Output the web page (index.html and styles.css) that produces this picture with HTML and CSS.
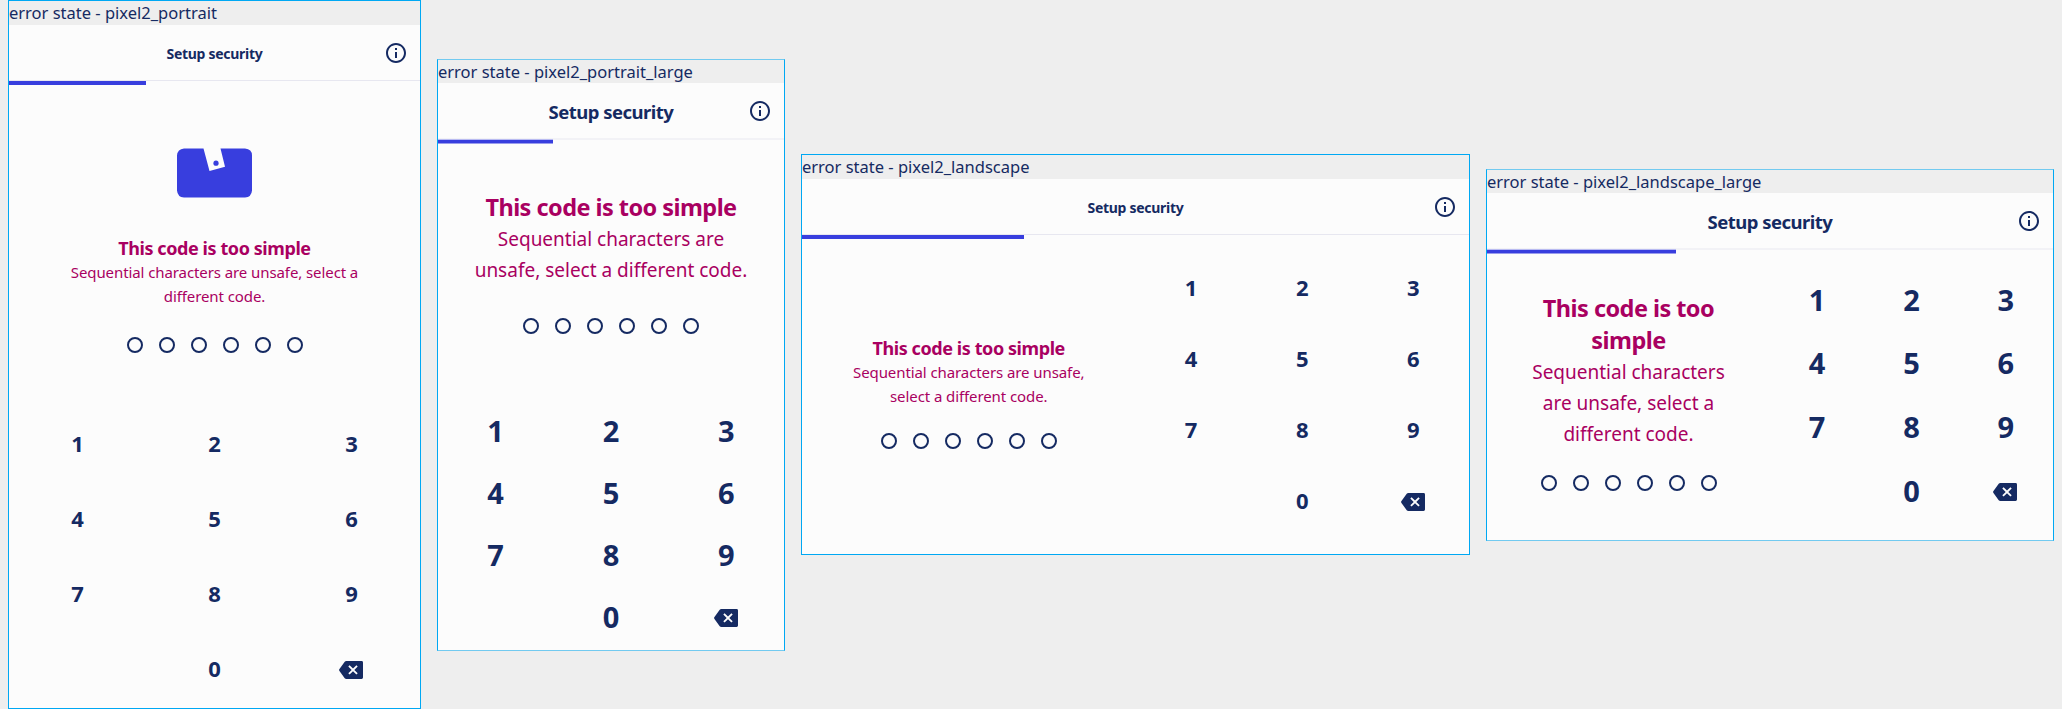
FILE: index.html
```
<!DOCTYPE html>
<html lang="en">
<head>
<meta charset="utf-8">
<title>Setup security - error state</title>
<link rel="stylesheet" href="styles.css">
</head>
<body>
<svg width="0" height="0" class="sprite">
  <symbol id="info" viewBox="0 0 24 24"><path d="M11 7h2v2h-2zm0 4h2v6h-2zm1-9C6.48 2 2 6.48 2 12s4.48 10 10 10 10-4.48 10-10S17.52 2 12 2zm0 18c-4.41 0-8-3.59-8-8s3.59-8 8-8 8 3.59 8 8-3.59 8-8 8z"/></symbol>
  <symbol id="backspace" viewBox="0 0 24 18"><path fill-rule="evenodd" d="M22.6 0H7.4Q6.300 0 5.700 .8L.3 8.300Q-.1 9 .3 9.700L5.700 17.200Q6.300 18 7.400 18H22.600Q24 18 24 16.600V1.400Q24 0 22.600 0ZM18.700 12.300L17.400 13.600 14 10.200 10.600 13.600 9.300 12.300 12.700 8.900 9.300 5.500 10.600 4.200 14 7.600 17.400 4.200 18.700 5.500 15.300 8.900Z"/></symbol>
</svg>
<main class="board">

  <section class="device portrait">
    <div class="label"><span>error state - pixel2_portrait</span></div>
    <header class="bar"><h1>Setup security</h1><svg class="info"><use href="#info"/></svg></header>
    <div class="progress"><i></i></div>
    <div class="body">
      <div class="message">
        <svg class="logo" viewBox="0 0 75 50"><path fill="#383ede" d="M7 .5H26.500L32.500 23 48 18.800 43.500 .5H68Q75 1 75 7.500V42.500Q74.500 49 68 49.500H7Q.500 49 0 42.500V7.500Q.500 1 7 .5Z"/><circle cx="39" cy="15.200" r="2.600" fill="#383ede"/></svg>
        <h2>This code is too simple</h2>
        <p>Sequential characters are unsafe, select a<br>different code.</p>
        <div class="dots"><i></i><i></i><i></i><i></i><i></i><i></i></div>
      </div>
      <div class="keys"><b>1</b><b>2</b><b>3</b><b>4</b><b>5</b><b>6</b><b>7</b><b>8</b><b>9</b><b></b><b>0</b><b><svg><use href="#backspace"/></svg></b></div>
    </div>
  </section>

  <section class="device portrait large">
    <div class="label"><span>error state - pixel2_portrait_large</span></div>
    <header class="bar"><h1>Setup security</h1><svg class="info"><use href="#info"/></svg></header>
    <div class="progress"><i></i></div>
    <div class="body">
      <div class="message">
        <h2>This code is too simple</h2>
        <p>Sequential characters are<br>unsafe, select a different code.</p>
        <div class="dots"><i></i><i></i><i></i><i></i><i></i><i></i></div>
      </div>
      <div class="keys"><b>1</b><b>2</b><b>3</b><b>4</b><b>5</b><b>6</b><b>7</b><b>8</b><b>9</b><b></b><b>0</b><b><svg><use href="#backspace"/></svg></b></div>
    </div>
  </section>

  <section class="device landscape">
    <div class="label"><span>error state - pixel2_landscape</span></div>
    <header class="bar"><h1>Setup security</h1><svg class="info"><use href="#info"/></svg></header>
    <div class="progress"><i></i></div>
    <div class="body">
      <div class="message">
        <h2>This code is too simple</h2>
        <p>Sequential characters are unsafe,<br>select a different code.</p>
        <div class="dots"><i></i><i></i><i></i><i></i><i></i><i></i></div>
      </div>
      <div class="keys"><b>1</b><b>2</b><b>3</b><b>4</b><b>5</b><b>6</b><b>7</b><b>8</b><b>9</b><b></b><b>0</b><b><svg><use href="#backspace"/></svg></b></div>
    </div>
  </section>

  <section class="device landscape large">
    <div class="label"><span>error state - pixel2_landscape_large</span></div>
    <header class="bar"><h1>Setup security</h1><svg class="info"><use href="#info"/></svg></header>
    <div class="progress"><i></i></div>
    <div class="body">
      <div class="message">
        <h2>This code is too<br>simple</h2>
        <p>Sequential characters<br>are unsafe, select a<br>different code.</p>
        <div class="dots"><i></i><i></i><i></i><i></i><i></i><i></i></div>
      </div>
      <div class="keys"><b>1</b><b>2</b><b>3</b><b>4</b><b>5</b><b>6</b><b>7</b><b>8</b><b>9</b><b></b><b>0</b><b><svg><use href="#backspace"/></svg></b></div>
    </div>
  </section>

</main>
</body>
</html>
```
FILE: styles.css
```
* { box-sizing: border-box; }
body { margin: 0; background: #eee; color: #152a62; font-family: "Noto Sans", "Open Sans", sans-serif; overflow: hidden; }
h1, h2, p { margin: 0; }
.sprite { display: block; }
.board { display: flex; align-items: flex-start; gap: 16px; height: 709px; padding-left: 8px; }

.device { flex: none; display: flex; flex-direction: column; border: 1px solid #00a8f3; background: #fcfcfc; }
.portrait { width: 413px; height: 709px; }
.portrait.large { width: 348px; height: 592px; margin-top: 59px; }
.landscape { width: 669px; height: 401px; margin-top: 154px; }
.landscape.large { width: 568px; height: 372px; margin-top: 169px; }
.large { border-top-color: #72caf0; border-bottom-color: #72caf0; }

.label { flex: none; height: 24px; background: #eee; }
.large .label { height: 23px; }
.label span { display: block; font-size: 16.5px; line-height: 23px; white-space: nowrap; }

.bar { flex: none; display: grid; grid-template-columns: 48px 1fr 48px; align-items: center; justify-items: center; height: 56px; border-bottom: 1px solid #e7e7f0; }
.bar h1 { grid-column: 2; padding-top: 2px; font-size: 14px; font-weight: 700; line-height: 20px; letter-spacing: -.28px; }
.large .bar h1 { padding-top: 2px; font-size: 18.5px; line-height: 24px; letter-spacing: -.52px; }
.large .bar { height: 57px; border-bottom: 2px solid #f2f2f6; }
.info { width: 24px; height: 24px; fill: #152a62; }

.progress { flex: none; height: 4px; }
.progress i { display: block; width: 33.333%; height: 4px; background: #383ede; }
.large .progress i { height: 5px; margin-top: -1px; background: linear-gradient(#b9bbf2 1px, #383ede 1px 4px, #9a9ced 4px); }

.body { flex: 1; display: flex; flex-direction: column; justify-content: space-between; }
.message { display: flex; flex-direction: column; align-items: center; color: #a90061; text-align: center; white-space: nowrap; }
.message h2 { font-size: 18px; font-weight: 700; line-height: 24px; letter-spacing: -.42px; }
.message p { font-size: 15px; line-height: 24px; letter-spacing: -.09px; }
.large .message h2 { font-size: 23.5px; line-height: 32px; letter-spacing: -.55px; }
.large .message p { padding-top: 1px; font-size: 19px; line-height: 31px; letter-spacing: 0; }
.logo { width: 75px; height: 50px; margin: 63px 0 38px; }
.large.portrait .message { padding-top: 47px; }
.dots { display: flex; gap: 16px; margin-top: 29px; }
.dots i { width: 16px; height: 16px; border: 2px solid #152a62; border-radius: 50%; }
.large .dots { margin-top: 32px; }
.landscape .dots { margin-top: 25px; }

.keys { display: grid; grid-template-columns: repeat(3, 1fr); grid-auto-rows: 75px; }
.portrait.large .keys { grid-auto-rows: 62px; }
.keys b { display: flex; align-items: center; justify-content: center; padding-bottom: 5px; font-size: 22px; line-height: 1; }
.large .keys b { font-size: 29px; }
.keys svg { width: 24px; height: 18px; margin: 3px 1px 0 0; fill: #152a62; }

.landscape .body { flex-direction: row; }
.landscape .message { width: 50%; justify-content: center; padding-bottom: 8px; }
.landscape.large .message { padding-bottom: 12px; }
.landscape .keys { width: 50%; padding: 15px 0 16px; grid-auto-rows: 71px; }
.landscape.large .keys { padding-top: 16px; grid-auto-rows: 63.6px; }
```
